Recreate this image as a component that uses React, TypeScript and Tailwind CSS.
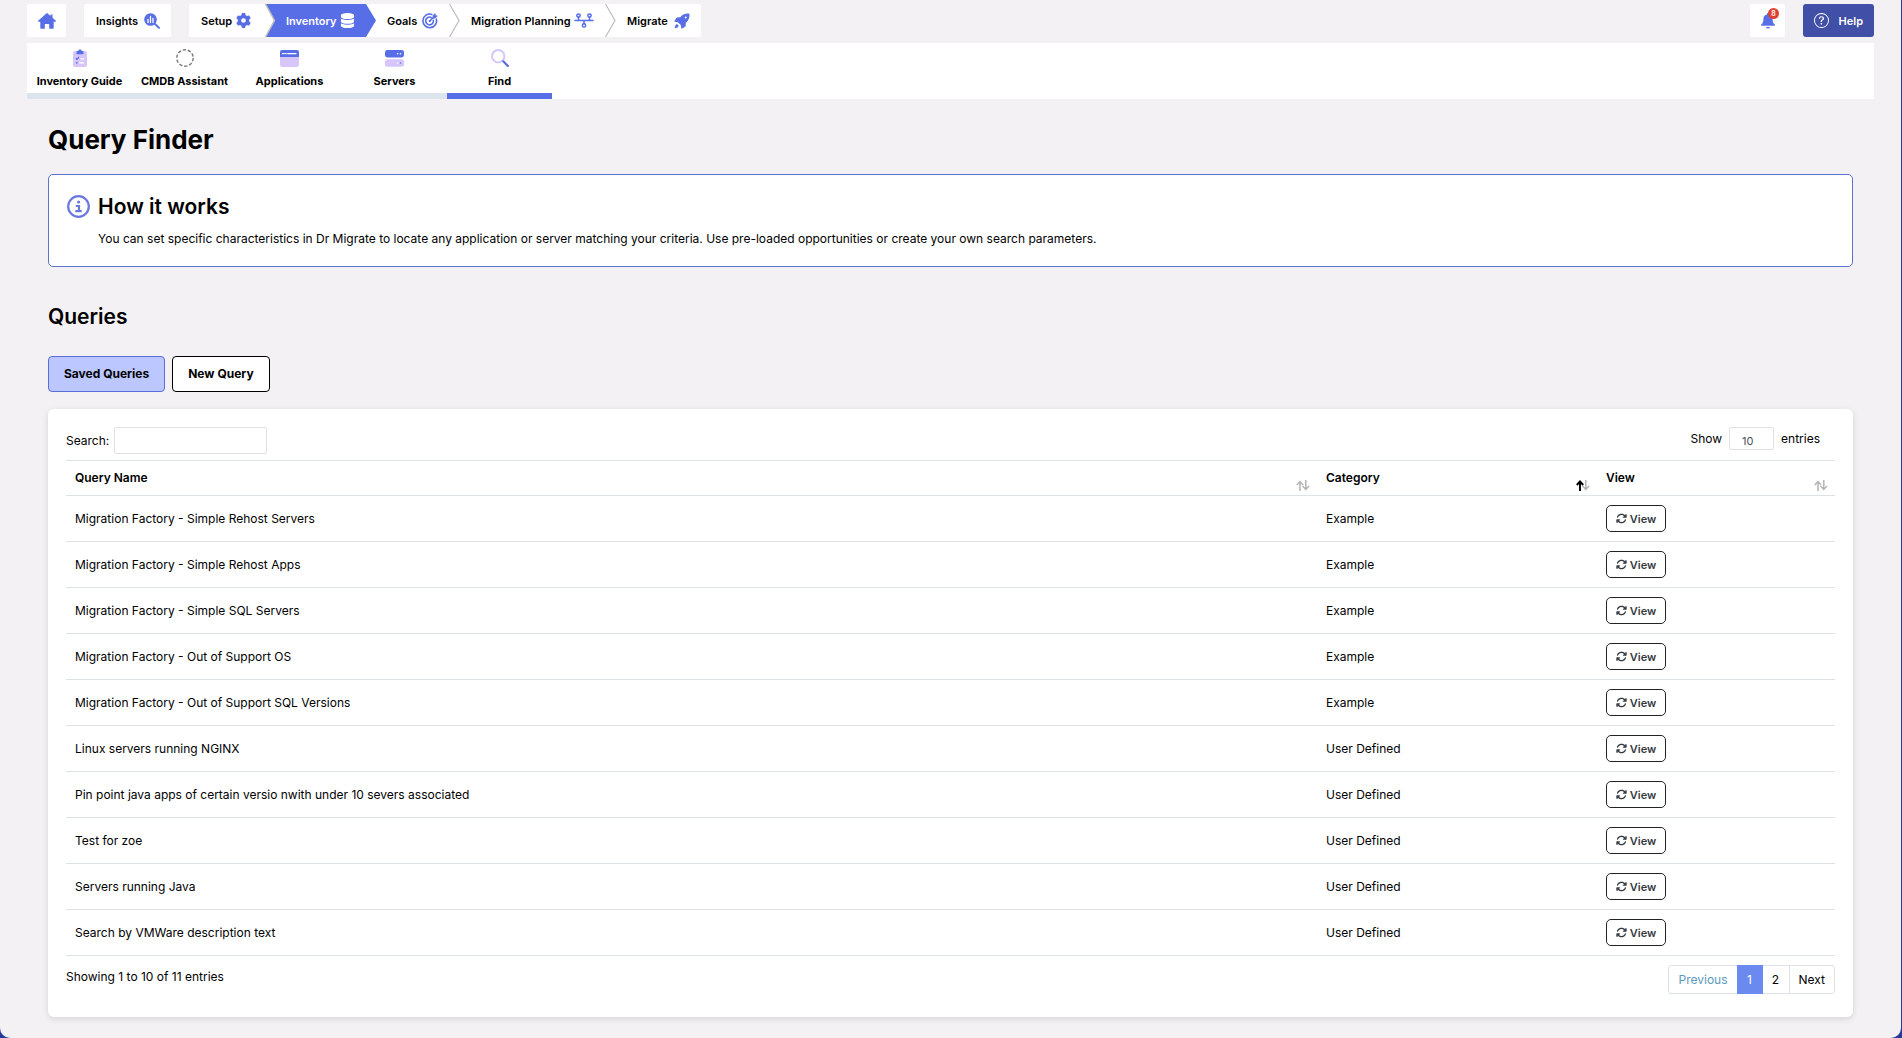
import React, { useState } from 'react';
import { FaArrowsRotate, FaDatabase, FaGear } from 'react-icons/fa6';
import { BsQuestionCircle } from 'react-icons/bs';

const queries = [
  { name: 'Migration Factory - Simple Rehost Servers', category: 'Example' },
  { name: 'Migration Factory - Simple Rehost Apps', category: 'Example' },
  { name: 'Migration Factory - Simple SQL Servers', category: 'Example' },
  { name: 'Migration Factory - Out of Support OS', category: 'Example' },
  { name: 'Migration Factory - Out of Support SQL Versions', category: 'Example' },
  { name: 'Linux servers running NGINX', category: 'User Defined' },
  { name: 'Pin point java apps of certain versio nwith under 10 severs associated', category: 'User Defined' },
  { name: 'Test for zoe', category: 'User Defined' },
  { name: 'Servers running Java', category: 'User Defined' },
  { name: 'Search by VMWare description text', category: 'User Defined' },
];

function HomeIcon() {
  return (
    <svg width="18" height="16" viewBox="0 0 18 16" fill="#586ee6">
      <path d="M8.3.4a1 1 0 0 1 1.4 0l2.8 2.5V1.6h2v3.1l3.1 2.8c.6.6.3 1.3-.4 1.3h-1.5v5.9c0 .7-.4 1.1-1.1 1.1h-3.4v-4.3c0-.4-.2-.6-.6-.6H7.4c-.4 0-.6.2-.6.6v4.3H3.4c-.7 0-1.1-.4-1.1-1.1V8.8H.8C.1 8.8-.2 8.1.4 7.5z" />
    </svg>
  );
}

function InsightsIcon() {
  return (
    <svg width="16" height="16" viewBox="0 0 16 16">
      <circle cx="6.5" cy="6.5" r="6.3" fill="#586ee6" />
      <path d="M11 11l4 3.9" stroke="#586ee6" strokeWidth="2" strokeLinecap="round" />
      <path d="M4 6.5v3M6.5 3.5v6M9 5.3v4.2" stroke="#fff" strokeWidth="1.3" strokeLinecap="round" />
    </svg>
  );
}

function GoalsIcon() {
  return (
    <svg width="16" height="16" viewBox="0 0 16 16" fill="none" stroke="#586ee6" strokeWidth="1.6" strokeLinecap="round">
      <path d="M9.8 1.4A6.8 6.8 0 1 0 14.3 6" />
      <path d="M9.2 4.4A3.9 3.9 0 1 0 11.4 7.2" />
      <circle cx="7.7" cy="8.1" r="1.1" fill="#586ee6" stroke="none" />
      <path d="M7.8 8l4.2-4.2" />
      <path d="M11 4.9V2.6L13 .6l.5 1.8 1.9.5-2 2z" fill="#586ee6" strokeWidth="0.6" />
    </svg>
  );
}

function PlanningIcon() {
  return (
    <svg width="20" height="15" viewBox="0 0 20 15" fill="none" stroke="#586ee6" strokeWidth="1.5">
      <path d="M1 7.5h18M4.5 4v3.5M15.5 4v3.5M10 7.5V11" strokeLinecap="round" />
      <circle cx="4.5" cy="2.6" r="1.7" />
      <circle cx="15.5" cy="2.6" r="1.7" />
      <circle cx="10" cy="12.4" r="1.7" />
    </svg>
  );
}

function RocketIcon() {
  return (
    <svg width="16" height="16" viewBox="0 0 16 16" fill="#586ee6" stroke="#586ee6" strokeLinejoin="round">
      <path d="M15 1c.3 3.800-1 6.800-3.800 9l-.1 3.200-3.300 2-.6-3.300-3-3-3.400-.6 2-3.300L6 4.800C8.400 1.900 11.400.7 15 1z" />
      <path d="M1 15l.5-2.600c.5-1 1.800-1 2.300-.4.600.6.5 1.800-.4 2.300z" strokeWidth=".6" />
      <circle cx="11.700" cy="4.400" r="1" fill="#fff" stroke="none" />
    </svg>
  );
}

function BellIcon() {
  return (
    <svg width="14" height="16" viewBox="0 0 14 16" fill="#586ee6">
      <path d="M7 0c.6 0 1 .4 1 1v.6a4.4 4.4 0 0 1 3.6 4.3c0 3 .6 4.1 2 5.4.7.7.4 1.5-.5 1.5H.9c-.9 0-1.2-.8-.5-1.5 1.4-1.3 2-2.4 2-5.4A4.4 4.4 0 0 1 6 1.600V1c0-.6.4-1 1-1zM5 14h4a2 1.600 0 0 1-4 0z" />
    </svg>
  );
}

function ClipboardIcon() {
  return (
    <svg width="14" height="18" viewBox="0 0 14 18">
      <rect y="2" width="14" height="16" rx="2.200" fill="#d6c6fc" />
      <path d="M3.500 4.600V3a1 1 0 0 1 1-1h.6a2 2 0 0 1 3.800 0h.6a1 1 0 0 1 1 1v1.600a.6.6 0 0 1-.6.6H4.100a.6.6 0 0 1-.6-.6z" fill="#586ee6" />
      <path d="M2.800 9.300l1.200 1 2-2.300" stroke="#586ee6" strokeWidth="1.200" fill="none" />
      <circle cx="3.800" cy="13.800" r=".9" fill="#586ee6" />
      <path d="M7.500 9.800h3.500M6.200 13.800H11" stroke="#fff" strokeWidth="1.200" />
    </svg>
  );
}

function DashedCircleIcon() {
  return (
    <svg width="18" height="18" viewBox="0 0 18 18" fill="none">
      <circle cx="9" cy="9" r="8.200" stroke="#777780" strokeWidth="1.400" strokeDasharray="3.400 1.752" />
    </svg>
  );
}

function AppWindowIcon() {
  return (
    <svg width="19" height="17" viewBox="0 0 19 17">
      <rect width="19" height="17" rx="2.200" fill="#d6c6fc" />
      <path d="M0 7V2.200A2.200 2.200 0 0 1 2.200 0h14.600A2.200 2.200 0 0 1 19 2.200V7z" fill="#586ee6" />
      <path d="M2.500 3.600h1.300M5.200 3.600h1M7.800 3.600h8.200" stroke="#fff" strokeWidth="1.400" strokeLinecap="round" />
    </svg>
  );
}

function ServersIcon() {
  return (
    <svg width="19" height="17" viewBox="0 0 19 17">
      <rect width="19" height="7.500" rx="2.400" fill="#586ee6" />
      <rect y="9.300" width="19" height="7.500" rx="2.400" fill="#d6c6fc" />
      <circle cx="12.700" cy="3.700" r=".8" fill="#fff" />
      <circle cx="15.500" cy="3.700" r=".8" fill="#fff" />
      <circle cx="12.700" cy="13" r=".8" fill="#fff" />
      <circle cx="15.500" cy="13" r=".8" fill="#586ee6" />
    </svg>
  );
}

function FindIcon() {
  return (
    <svg width="18" height="18" viewBox="0 0 18 18" fill="none">
      <circle cx="7.200" cy="7.200" r="6.200" stroke="#d6c6fc" strokeWidth="2" />
      <path d="M12.300 12.300l4.500 4.600" stroke="#586ee6" strokeWidth="2.200" strokeLinecap="round" />
    </svg>
  );
}

function InfoIcon() {
  return (
    <svg width="23" height="23" viewBox="0 0 23 23" fill="none" stroke="#6b77e0">
      <circle cx="11.500" cy="11.500" r="10.300" strokeWidth="2.200" />
      <circle cx="11.600" cy="7" r="1.600" fill="#6b77e0" stroke="none" />
      <path d="M8.800 11h3.200v5M8.300 16.200h6.400" strokeWidth="2.200" />
    </svg>
  );
}

function Chevron() {
  return (
    <svg width="11" height="33" viewBox="0 0 11 33" fill="none" stroke="#bdbdbd" strokeWidth="1.200">
      <path d="M.5 0l9.500 16.500L.5 33" />
    </svg>
  );
}

function SortIcon({ asc }: { asc?: boolean }) {
  return (
    <svg width="14" height="11" viewBox="0 0 14 11" fill="none" strokeWidth="1.500">
      <path d="M9.800 0v9.500M6.600 6l3.200 3.500L13 6" stroke="#b4b4b4" />
      <path d="M4 11V1.500M.8 5L4 1.500 7.200 5" stroke={asc ? '#000' : '#b4b4b4'} strokeWidth={asc ? 1.900 : 1.500} />
    </svg>
  );
}

const tabs = [
  { label: 'Inventory Guide', icon: <ClipboardIcon /> },
  { label: 'CMDB Assistant', icon: <DashedCircleIcon /> },
  { label: 'Applications', icon: <AppWindowIcon /> },
  { label: 'Servers', icon: <ServersIcon /> },
  { label: 'Find', icon: <FindIcon />, active: true },
];

function TopNav() {
  return (
    <nav className="flex h-[33px] text-[11px] font-semibold">
      <a href="#home" aria-label="Home" className="flex w-[39px] items-center justify-center rounded-xs bg-white">
        <HomeIcon />
      </a>
      <a href="#insights" className="ml-[18px] flex w-[87px] items-center justify-between rounded-xs bg-white pr-[11px] pl-3">
        Insights <InsightsIcon />
      </a>
      <div className="ml-[18px] flex items-center rounded-xs bg-white">
        <a href="#setup" className="flex w-[76px] items-center justify-between pr-[14px] pl-3">
          Setup <FaGear className="size-[15px] text-[#586ee6]" />
        </a>
        <div className="flex h-full w-[111px] items-center bg-[#586ee6] text-white [clip-path:polygon(0_0,101px_0,100%_50%,101px_100%,0_100%)]">
          <svg width="11" height="33" viewBox="0 0 11 33" fill="#fff" stroke="#bdbdbd" strokeWidth="1.500">
            <path d="M-1-1H0l9.500 17.500L0 34h-1z" />
          </svg>
          <a href="#inventory" className="flex w-[79px] items-center justify-between pl-[10px]">
            Inventory <FaDatabase className="size-[15px]" />
          </a>
        </div>
        <a href="#goals" className="flex w-[73px] items-center justify-between pr-[11px] pl-[11px]">
          Goals <GoalsIcon />
        </a>
        <Chevron />
        <a href="#planning" className="flex w-[145px] items-center justify-between pr-[11px] pl-[11px]">
          Migration Planning <PlanningIcon />
        </a>
        <Chevron />
        <a href="#migrate" className="flex w-[85px] items-center justify-between pr-[11px] pl-[11px]">
          Migrate <RocketIcon />
        </a>
      </div>
      <button aria-label="Notifications" className="relative ml-auto flex w-[35px] items-center justify-center rounded-xs bg-white">
        <BellIcon />
        <span className="absolute top-1 right-[6px] flex size-[11px] items-center justify-center rounded-full bg-[#e0402f] text-[7px] text-white">8</span>
      </button>
      <button className="ml-[18px] flex w-[71px] items-center justify-between rounded-[3px] bg-[#414fa6] pr-[11px] pl-[11px] text-white">
        <BsQuestionCircle className="size-[15px]" /> Help
      </button>
    </nav>
  );
}

export default function App() {
  const [search, setSearch] = useState('');
  const [pageSize, setPageSize] = useState('10');
  const rows = queries.filter((q) => q.name.toLowerCase().includes(search.toLowerCase()));

  return (
    <div className="min-h-screen bg-[#263a9a] pr-px font-['Inter',sans-serif] text-[12px] leading-5 text-black">
      <div className="min-h-screen rounded-b-[10px] bg-[#f3f1f4] pt-1 pr-[27px] pb-5 pl-[27px]">
        <TopNav />
        <nav className="mt-[6px] flex h-14 bg-white text-[11px] font-bold">
          {tabs.map((tab) => (
            <a
              key={tab.label}
              href="#tab"
              className={`flex w-[105px] flex-col items-center border-b-[6px] whitespace-nowrap ${tab.active ? 'border-[#586ee6]' : 'border-[#dde4ec]'}`}
            >
              <span className="flex h-[30px] items-center">{tab.icon}</span>
              <span className="leading-4">{tab.label}</span>
            </a>
          ))}
        </nav>

        <main className="px-[21px]">
          <h1 className="mt-[21px] text-[26px] leading-10 font-bold">Query Finder</h1>

          <section className="mt-[14px] flex gap-2 rounded-[5px] border border-[#5b73cc] bg-white px-[18px] pt-5 pb-[17px]">
            <InfoIcon />
            <div>
              <h2 className="text-[21px] leading-6 font-semibold">How it works</h2>
              <p className="mt-[10px]">
                You can set specific characteristics in Dr Migrate to locate any application or server matching your criteria. Use pre-loaded opportunities or create your own search parameters.
              </p>
            </div>
          </section>

          <h2 className="mt-[34px] text-[21px] leading-8 font-semibold">Queries</h2>
          <div className="mt-[23px] flex gap-[7px] font-bold">
            <button className="h-9 rounded-[4px] border border-[#586ed8] bg-[#bcc6ff] px-[15px]">Saved Queries</button>
            <button className="h-9 rounded-[4px] border border-black bg-white px-[15px]">New Query</button>
          </div>

          <section className="mt-[17px] rounded-[6px] bg-white px-[18px] pt-[18px] pb-[23px] shadow-[0_2px_6px_rgba(0,0,0,0.12)]">
            <div className="flex items-start justify-between pb-[6px]">
              <label className="flex items-center gap-[5px]">
                Search:
                <input
                  type="search"
                  className="h-[27px] w-[153px] rounded-xs border border-[#dee2e6] px-2 outline-none"
                  value={search}
                  onChange={(e) => setSearch(e.target.value)}
                />
              </label>
              <label className="mr-[15px] flex items-center gap-[7px]">
                Show
                <select
                  className="h-[23px] w-[45px] appearance-none rounded-xs border border-[#dee2e6] pt-[3px] pl-3 text-[11px] text-[#495057]"
                  value={pageSize}
                  onChange={(e) => setPageSize(e.target.value)}
                >
                  <option>10</option>
                  <option>25</option>
                  <option>50</option>
                </select>
                entries
              </label>
            </div>

            <table className="w-full table-fixed border-collapse text-left">
              <thead>
                <tr className="h-[35px] border-y border-[#dce2e6]">
                  <th className="px-[9px] font-semibold">
                    <div className="flex justify-between">Query Name <span className="-mr-[2px] -mb-[3px] flex items-end"><SortIcon /></span></div>
                  </th>
                  <th className="w-[280px] px-[9px] font-semibold">
                    <div className="flex justify-between">Category <span className="-mr-[2px] -mb-[3px] flex items-end"><SortIcon asc /></span></div>
                  </th>
                  <th className="w-[238px] px-[9px] font-semibold">
                    <div className="flex justify-between">View <span className="-mr-[2px] -mb-[3px] flex items-end"><SortIcon /></span></div>
                  </th>
                </tr>
              </thead>
              <tbody>
                {rows.map((q) => (
                  <tr key={q.name} className="h-[46px] border-b border-[#dce2e6]">
                    <td className="px-[9px]">{q.name}</td>
                    <td className="px-[9px]">{q.category}</td>
                    <td className="px-[9px]">
                      <button className="flex h-[27px] w-[60px] items-center justify-center gap-[3px] rounded-[5px] border border-[#212529] text-[11px] font-semibold text-[#343a40]">
                        <FaArrowsRotate className="size-[11px]" /> View
                      </button>
                    </td>
                  </tr>
                ))}
              </tbody>
            </table>

            <div className="flex items-start justify-between pt-[9px]">
              <p className="pt-[2px]">Showing 1 to 10 of 11 entries</p>
              <nav className="flex h-[29px] rounded-[3px] border border-[#dbe2ec]">
                <button className="px-[9px] text-[#5c9abf]">Previous</button>
                <button className="-my-px w-[26px] bg-[#6a8af0] text-white">1</button>
                <button className="w-[26px]">2</button>
                <button className="border-l border-[#dbe2ec] px-[9px]">Next</button>
              </nav>
            </div>
          </section>
        </main>
      </div>
    </div>
  );
}
